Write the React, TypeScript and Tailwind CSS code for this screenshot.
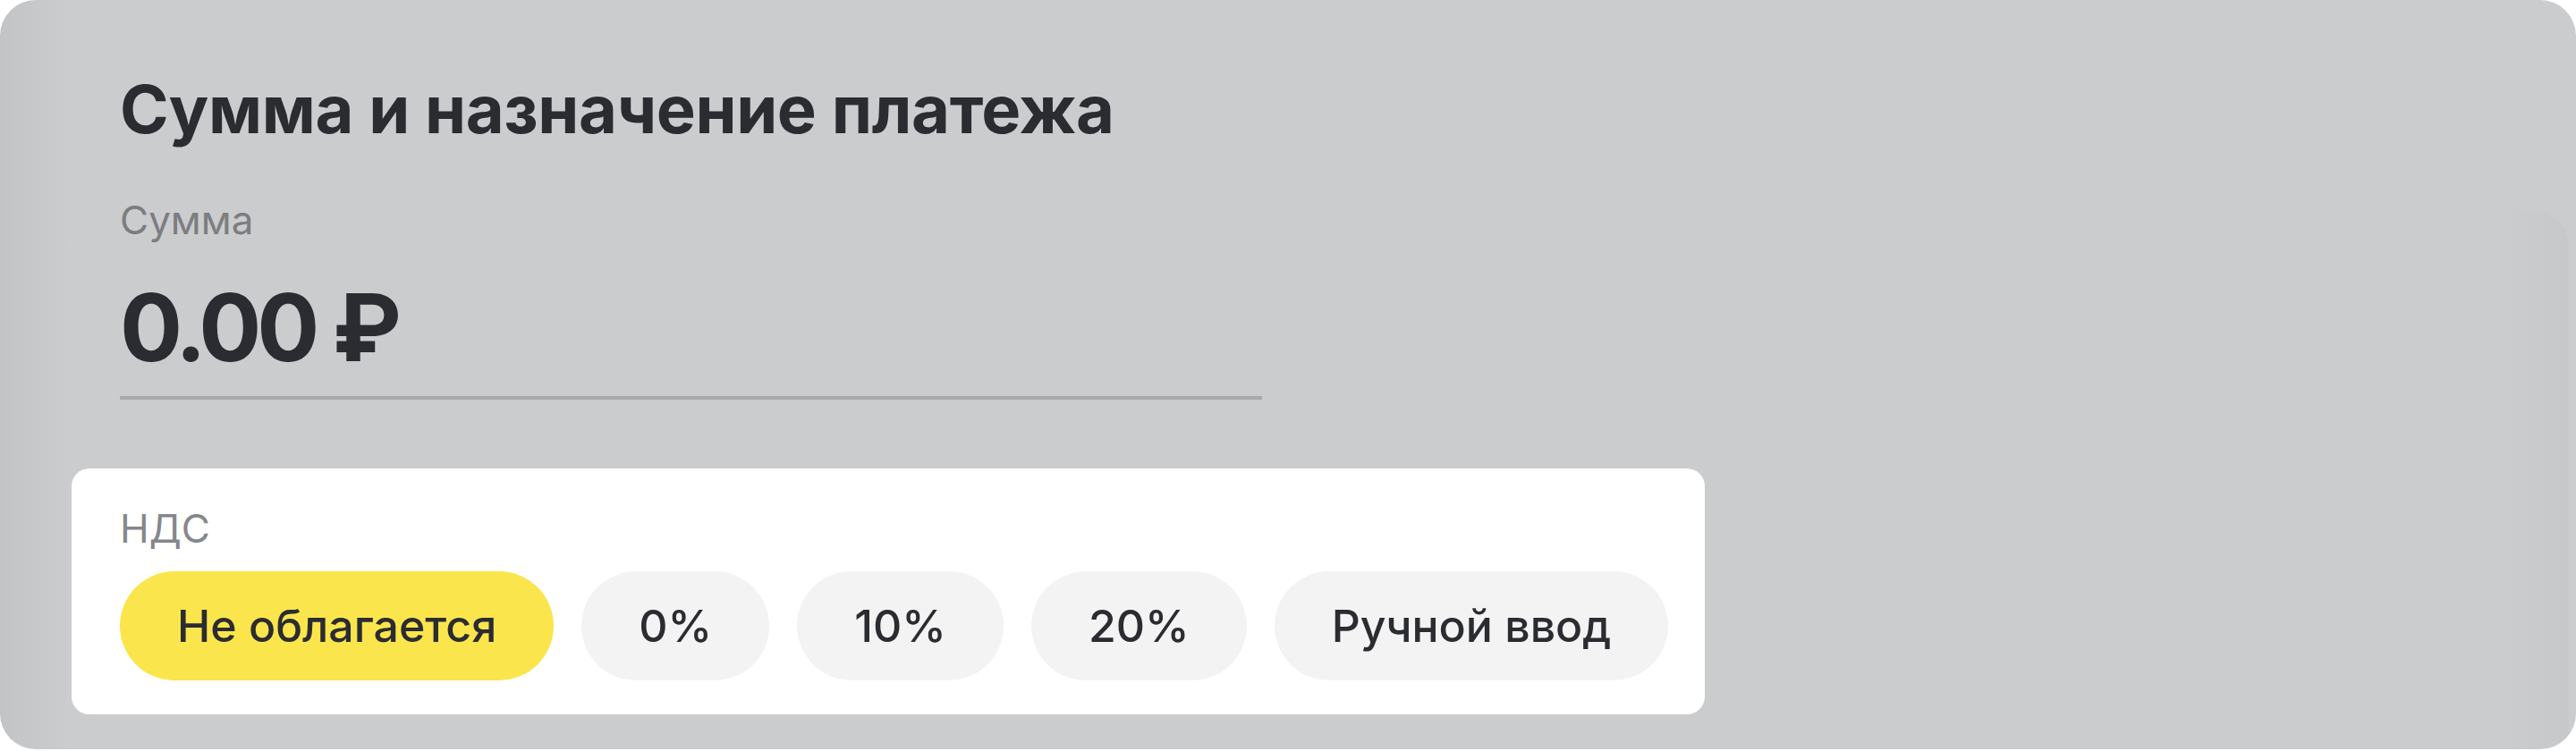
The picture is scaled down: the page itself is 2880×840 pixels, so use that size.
import { useState } from 'react';
import clsx from 'clsx';

const RATES = ['Не облагается', '0%', '10%', '20%', 'Ручной ввод'];

export default function App() {
  const [rate, setRate] = useState('Не облагается');

  return (
    <div className="w-[2880px] h-[840px] bg-white font-['Inter',sans-serif]">
      <div className="relative h-[838px] overflow-hidden rounded-[40px] bg-[#cbccce] pl-[134px] pt-[78px]">
        {/* soft shadows at the edges of the dimmed card */}
        <div className="pointer-events-none absolute inset-y-0 left-0 w-[80px] bg-gradient-to-r from-black/[0.04] to-transparent" />
        <div className="pointer-events-none absolute bottom-0 right-[8px] top-[236px] w-[76px] rounded-tr-[40px] bg-gradient-to-l from-black/[0.02] to-transparent" />

        <h1 className="text-[74px] font-bold leading-[88px] tracking-[-0.005em] text-[#2b2c31]">
          Сумма и назначение платежа
        </h1>

        <div className="mt-[54px] text-[44px] leading-[52px] text-[#7c7d81]">Сумма</div>
        <div className="mt-[34px] text-[104px] font-bold leading-[120px] tracking-[-0.05em] text-[#2b2c31]">0.00 ₽</div>
        <div className="mt-[17px] h-[4px] w-[1277px] bg-[#a9aaac]" />

        <div className="relative -ml-[54px] mt-[77px] h-[275px] w-[1826px] rounded-[20px] bg-white pl-[54px] pt-[41px]">
          <div className="text-[44px] leading-[52px] text-[#85878c]">НДС</div>
          <div className="mt-[22px] flex gap-[31px]">
            {RATES.map((r) => (
              <button
                key={r}
                onClick={() => setRate(r)}
                className={clsx(
                  'h-[122px] rounded-full px-[64px] text-[50px] font-medium text-[#2b2c31]',
                  rate === r ? 'bg-[#fae54c]' : 'bg-[#f3f3f4]'
                )}
              >
                {r}
              </button>
            ))}
          </div>
        </div>
      </div>
    </div>
  );
}
